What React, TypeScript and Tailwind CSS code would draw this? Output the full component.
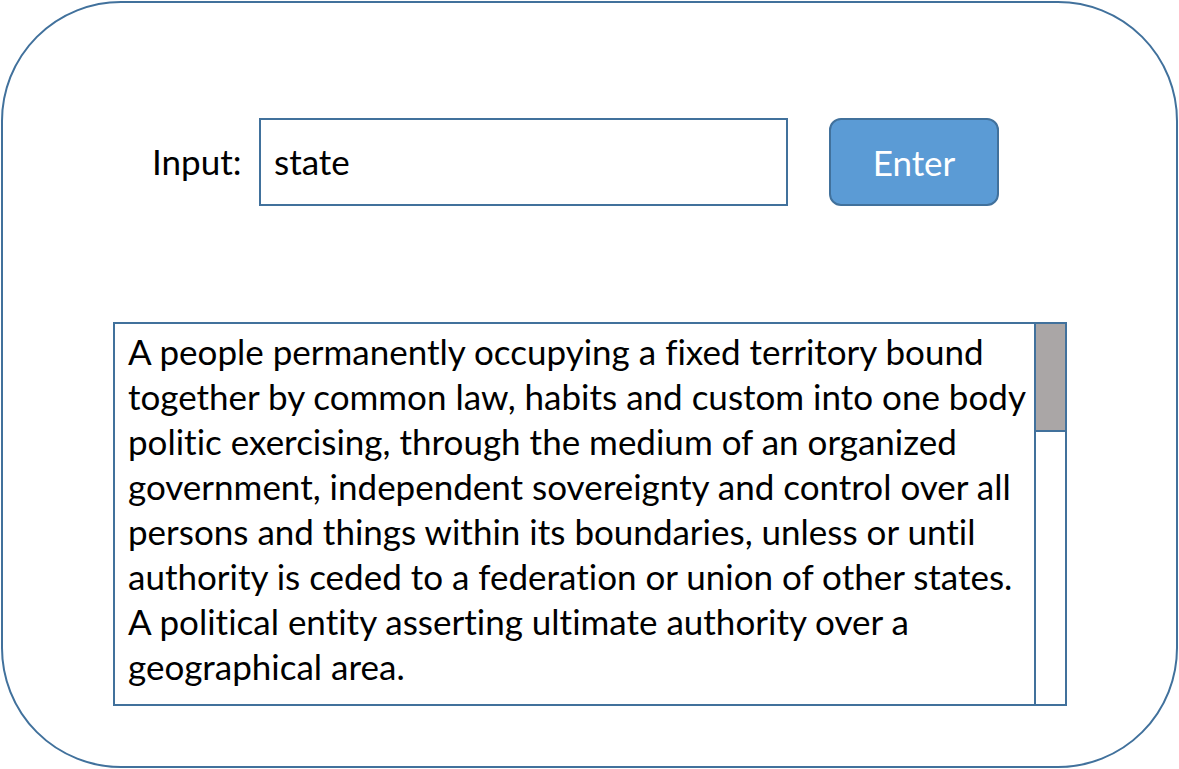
const lines = [
  "A people permanently occupying a fixed territory bound",
  "together by common law, habits and custom into one body",
  "politic exercising, through the medium of an organized",
  "government, independent sovereignty and control over all",
  "persons and things within its boundaries, unless or until",
  "authority is ceded to a federation or union of other states.",
  "A political entity asserting ultimate authority over a",
  "geographical area.",
];

export default function App() {
  return (
    <div className="w-[1179px] h-[769px] bg-white p-px font-['Lato','Open_Sans',sans-serif] [font-variant-ligatures:none]">
      <div className="h-full w-full rounded-[120px] border-2 border-[#41719c] flex flex-col">
        {/* input row */}
        <div className="flex items-center mt-[115px] ml-[149px]">
          <span className="text-[35px] leading-[42px] text-black w-[107px] -mt-[3px]">Input:</span>
          <div className="w-[529px] h-[88px] border-2 border-[#41719c] flex items-center pl-[13px]">
            <span className="text-[35px] leading-[42px] text-black -mt-[3px]">state</span>
          </div>
          <button className="ml-[41px] w-[170px] h-[88px] rounded-[12px] border-2 border-[#41719c] bg-[#5b9bd5] text-white text-[35px] leading-[42px]">
            Enter
          </button>
        </div>

        {/* result box */}
        <div className="mt-[116px] ml-[110px] w-[954px] h-[384px] border-2 border-[#41719c] flex">
          <div className="flex-1 pl-[13px] pt-[5px] text-[35px] leading-[45px] text-black">
            {lines.map((l) => (
              <div key={l} className="whitespace-nowrap">
                {l}
              </div>
            ))}
          </div>
          <div className="w-[31px] border-l-2 border-[#41719c]">
            <div className="h-[108px] bg-[#aaa6a6] border-b-2 border-[#41719c]" />
          </div>
        </div>
      </div>
    </div>
  );
}
